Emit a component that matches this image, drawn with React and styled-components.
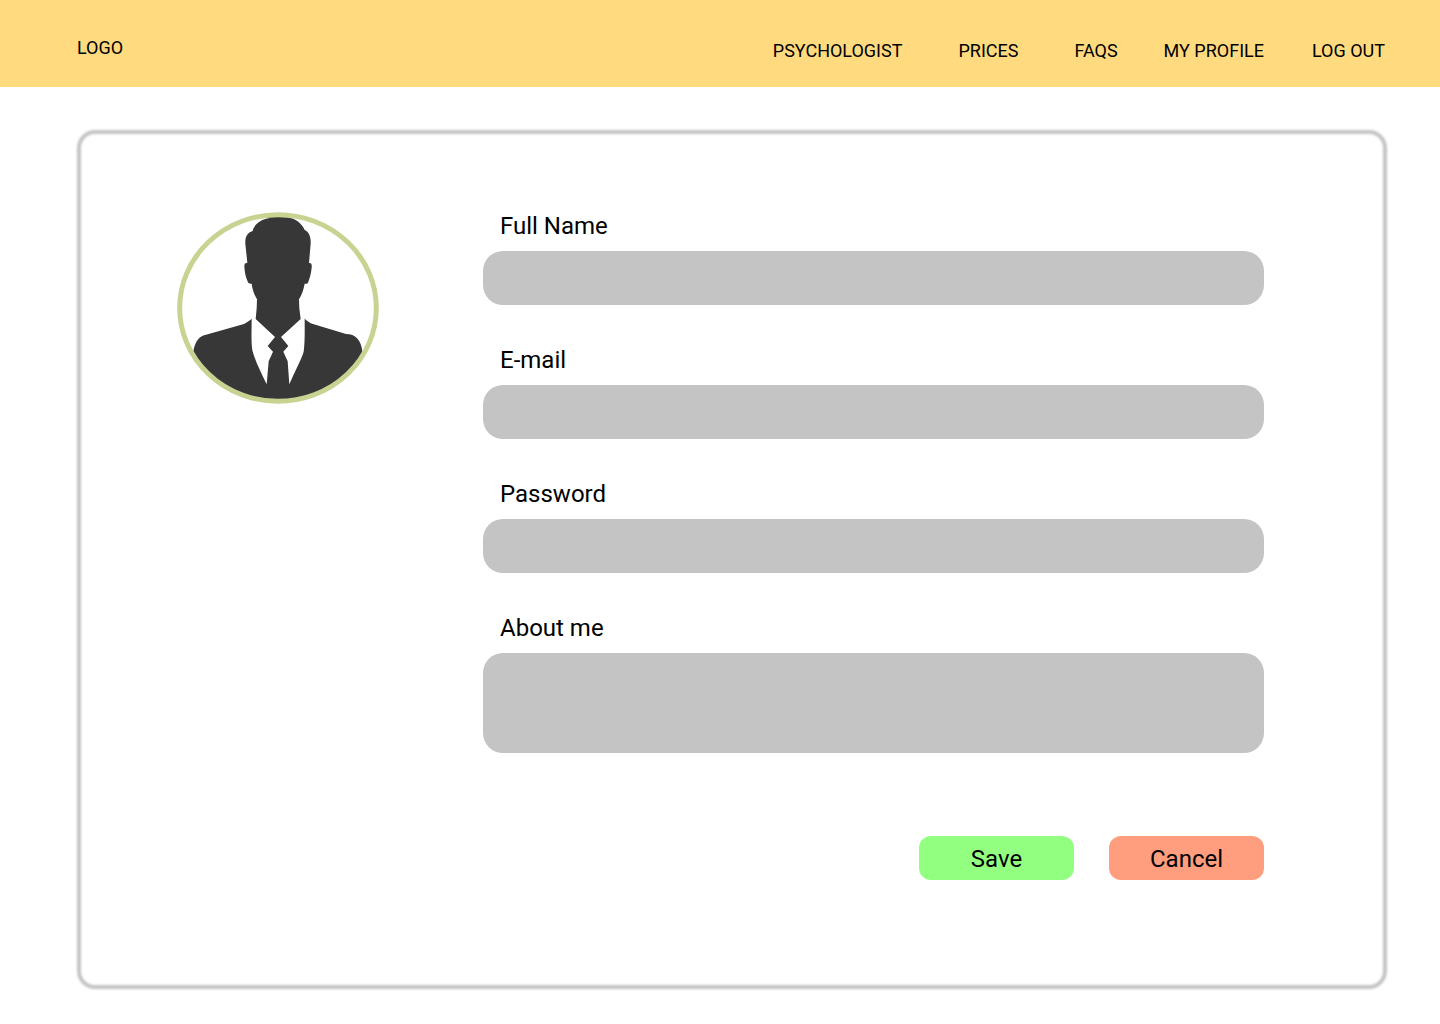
import React from "react";
import styled, { createGlobalStyle } from "styled-components";

const GlobalStyle = createGlobalStyle`
  *, *::before { box-sizing: border-box; }
  body {
    margin: 0;
    background: #fff;
    color: #000;
    font-family: Roboto, "Liberation Sans", sans-serif;
  }
`;

const Header = styled.header`
  display: flex;
  justify-content: space-between;
  align-items: flex-start;
  padding: 36px 55px 21px 77px;
  background: #ffda7f;
  font-size: 18px;
`;

const Logo = styled.a`
  line-height: 24px;
  color: inherit;
  text-decoration: none;
`;

const Nav = styled.nav`
  display: flex;
  gap: 46px;
`;

const NavGroup = styled.div`
  display: flex;
  gap: ${({ $gap }) => $gap}px;
`;

const NavLink = styled.a`
  line-height: 30px;
  color: inherit;
  text-decoration: none;
  white-space: nowrap;
`;

const Main = styled.main`
  padding: 43px 53px 35px 77px;
`;

const Card = styled.section`
  position: relative;
  display: grid;
  grid-template-columns: 202px 1fr;
  align-items: start;
  gap: 104px;
  padding: 82px 123px 109px 100px;

  /* soft-edged frame */
  &::before {
    content: "";
    position: absolute;
    inset: 0;
    border: 4px solid #c4c4c4;
    border-radius: 18px;
    filter: blur(1px);
    pointer-events: none;
  }
`;

const Avatar = styled.svg`
  display: block;
  width: 202px;
  height: 192px;
`;

const Form = styled.form`
  position: relative;
  display: flex;
  flex-direction: column;
  gap: 41px;
`;

const Field = styled.div`
  display: flex;
  flex-direction: column;
  gap: 11px;
`;

const Label = styled.label`
  padding-left: 17px;
  font-size: 24px;
  line-height: 28px;
`;

const Control = styled.input`
  display: block;
  width: 100%;
  height: ${({ $height }) => $height}px;
  padding: 12px 17px;
  border: 0;
  border-radius: 20px;
  background: #c4c4c4;
  color: inherit;
  font: inherit;
  font-size: 24px;
  resize: none;
`;

const Actions = styled.div`
  display: flex;
  justify-content: flex-end;
  gap: 35px;
  padding-top: 42px;
`;

const Button = styled.button`
  width: 155px;
  height: 44px;
  padding: 2px 0 0;
  border: 0;
  border-radius: 12px;
  background: ${({ $color }) => $color};
  color: inherit;
  font: inherit;
  font-size: 24px;
  line-height: 28px;
  cursor: pointer;
`;

const mainLinks = ["PSYCHOLOGIST", "PRICES", "FAQS"];
const accountLinks = ["MY PROFILE", "LOG OUT"];

const fields = [
  { id: "name", label: "Full Name", type: "text", height: 54 },
  { id: "email", label: "E-mail", type: "email", height: 54 },
  { id: "password", label: "Password", type: "password", height: 54 },
  { id: "about", label: "About me", as: "textarea", height: 100 },
];

function ProfilePicture() {
  return (
    <Avatar viewBox="21 21 606 576" role="img" aria-label="Profile picture">
      <defs>
        <clipPath id="portrait">
          <ellipse cx="324" cy="309" rx="290" ry="275" />
        </clipPath>
      </defs>
      <g clipPath="url(#portrait)" fill="#373737">
        <path d="M248 78 C252 58 274 42 298 40 L288 36 L350 36 C374 40 396 54 404 75 C417 80 423 96 422 116 L417 174 C424 173 426 178 425 188 C423 208 418 222 414 233 C411 237 407 237 404 236 C401 254 395 270 387 283 L388 310 L392 342 L333 396 L355 423 L340 440 L353 469 L358 538 C374 500 394 464 401 440 C405 410 404 375 404 341 C412 348 420 354 429 357 L528 387 C556 387 574 405 577 440 L577 600 L70 600 L70 440 C74 408 91 391 108 389 L222 357 C231 352 238 347 245 341 C245 375 243 410 247 436 C256 470 274 504 290 538 L296 469 L309 440 L293 423 L315 396 L257 342 L260 310 L261 283 C253 269 247 254 245 236 C240 237 236 236 234 232 C227 218 224 202 223 184 C223 176 226 173 232 174 L226 116 C225 96 232 83 248 78 Z" />
      </g>
      <ellipse cx="324" cy="309" rx="295" ry="280" fill="none" stroke="#c8d392" strokeWidth="15" />
    </Avatar>
  );
}

export default function App() {
  return (
    <>
      <GlobalStyle />
      <Header>
        <Logo href="#">LOGO</Logo>
        <Nav>
          <NavGroup $gap={56}>
            {mainLinks.map((text) => (
              <NavLink key={text} href="#">{text}</NavLink>
            ))}
          </NavGroup>
          <NavGroup $gap={48}>
            {accountLinks.map((text) => (
              <NavLink key={text} href="#">{text}</NavLink>
            ))}
          </NavGroup>
        </Nav>
      </Header>
      <Main>
        <Card>
          <ProfilePicture />
          <Form onSubmit={(event) => event.preventDefault()}>
            {fields.map(({ id, label, as, type, height }) => (
              <Field key={id}>
                <Label htmlFor={id}>{label}</Label>
                <Control id={id} name={id} as={as} type={type} $height={height} />
              </Field>
            ))}
            <Actions>
              <Button type="submit" $color="#93ff81">Save</Button>
              <Button type="button" $color="#ff9d7f">Cancel</Button>
            </Actions>
          </Form>
        </Card>
      </Main>
    </>
  );
}
